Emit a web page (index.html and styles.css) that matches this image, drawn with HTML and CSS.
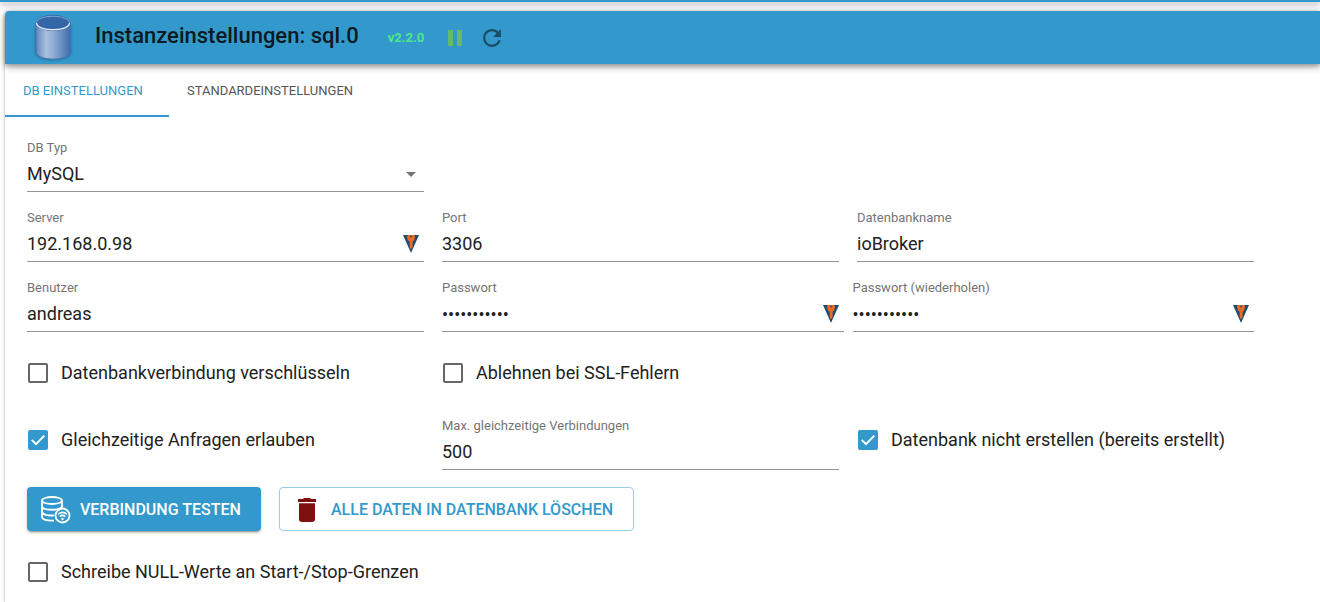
FILE: index.html
```html
<!DOCTYPE html>
<html lang="de">
<head>
<meta charset="utf-8">
<title>Instanzeinstellungen: sql.0</title>
<link rel="stylesheet" href="styles.css">
</head>
<body>
<svg class="defs" aria-hidden="true">
  <symbol id="key" viewBox="0 0 16 18">
    <path d="M0 0H16L8 18Z" fill="#1f4d6e"/>
    <path d="M4.600 0H11.400L12 2.500L11 5.500L9.600 6.800V12L8 14.200L6.700 12.500V6.800L5 5.500L4 2.500Z" fill="#ee6a24"/>
    <circle cx="8" cy="1.500" r=".9" fill="#1f4d6e"/>
  </symbol>
</svg>
<div class="app-bar"></div>
<main class="card">
  <header class="toolbar">
    <svg class="db-logo" viewBox="0 0 42 48" aria-hidden="true">
      <defs>
        <linearGradient id="side"><stop offset="0" stop-color="#5f86c0"/><stop offset=".3" stop-color="#a9c0de"/><stop offset=".5" stop-color="#90aed4"/><stop offset="1" stop-color="#426fae"/></linearGradient>
        <filter id="soft" x="-20%" y="-20%" width="140%" height="140%"><feGaussianBlur stdDeviation="1.500"/></filter>
      </defs>
      <path d="M3 12V38C3 49 39 49 39 38V12Z" fill="#1f5384" opacity=".6" filter="url(#soft)"/>
      <path d="M4 9V38C4 47.500 38 47.500 38 38V9Z" fill="url(#side)" stroke="#4473ad"/>
      <ellipse cx="21" cy="9" rx="17" ry="7.500" fill="#3566a8" stroke="#2f5c9d"/>
      <path d="M4.500 9C5 18 37 18 37.500 9" fill="none" stroke="#e9f0f8" stroke-width="1.300"/>
      <path d="M4.500 9C5 0 37 0 37.500 9" fill="none" stroke="#9bb9dc" stroke-width=".8"/>
    </svg>
    <h1 class="title">Instanzeinstellungen: sql.0</h1>
    <span class="version">v2.2.0</span>
    <button class="icon-button pause" type="button" aria-label="Pause">
      <svg viewBox="0 0 14 16" width="14" height="16"><path d="M0 0H5V16H0ZM9 0H14V16H9Z" fill="currentColor"/></svg>
    </button>
    <button class="icon-button reload" type="button" aria-label="Neu laden">
      <svg viewBox="3 3 18 18" width="20" height="20"><path fill="currentColor" d="M17.650 6.350C16.200 4.900 14.210 4 12 4c-4.420 0-7.990 3.580-7.990 8s3.570 8 7.990 8c3.730 0 6.840-2.550 7.730-6h-2.080c-.820 2.330-3.040 4-5.650 4-3.310 0-6-2.690-6-6s2.690-6 6-6c1.660 0 3.140.69 4.220 1.780L13 11h7V4l-2.350 2.350z"/></svg>
    </button>
  </header>

  <nav class="tabs" role="tablist">
    <button class="tab active" type="button" role="tab" aria-selected="true">DB EINSTELLUNGEN</button>
    <button class="tab" type="button" role="tab" aria-selected="false">STANDARDEINSTELLUNGEN</button>
  </nav>

  <form class="settings">
    <div class="row">
      <div class="field">
        <label for="dbtype">DB Typ</label>
        <div class="control">
          <select id="dbtype"><option>MySQL</option></select>
          <svg class="adorn arrow" viewBox="0 0 10 5"><path d="M0 0H10L5 5Z" fill="#757575"/></svg>
        </div>
      </div>
    </div>
    <div class="row">
      <div class="field">
        <label for="server">Server</label>
        <div class="control"><input id="server" type="text" value="192.168.0.98"><svg class="adorn key"><use href="#key"/></svg></div>
      </div>
      <div class="field">
        <label for="port">Port</label>
        <div class="control"><input id="port" type="text" value="3306"></div>
      </div>
      <div class="field">
        <label for="dbname">Datenbankname</label>
        <div class="control"><input id="dbname" type="text" value="ioBroker"></div>
      </div>
    </div>
    <div class="row">
      <div class="field">
        <label for="user">Benutzer</label>
        <div class="control"><input id="user" type="text" value="andreas"></div>
      </div>
      <div class="passwords">
        <div class="field">
          <label for="pass">Passwort</label>
          <div class="control"><input id="pass" type="password" value="abcdefghijk"><svg class="adorn key"><use href="#key"/></svg></div>
        </div>
        <div class="field">
          <label for="pass2">Passwort (wiederholen)</label>
          <div class="control"><input id="pass2" type="password" value="abcdefghijk"><svg class="adorn key"><use href="#key"/></svg></div>
        </div>
      </div>
    </div>
    <div class="row padded spaced">
      <label class="check"><input type="checkbox">Datenbankverbindung verschlüsseln</label>
      <label class="check"><input type="checkbox">Ablehnen bei SSL-Fehlern</label>
    </div>
    <div class="row">
      <label class="check"><input type="checkbox" checked>Gleichzeitige Anfragen erlauben</label>
      <div class="field">
        <label for="maxcon">Max. gleichzeitige Verbindungen</label>
        <div class="control"><input id="maxcon" type="text" value="500"></div>
      </div>
      <label class="check"><input type="checkbox" checked>Datenbank nicht erstellen (bereits erstellt)</label>
    </div>
    <div class="actions">
      <button class="button primary" type="button">
        <svg viewBox="0 0 30 28" width="30" height="28" fill="none" stroke="#fff" stroke-width="1.800">
          <ellipse cx="11" cy="4.500" rx="10" ry="3.500"/>
          <path d="M1 4.500V21C1 23.500 6 25 13 24.600M21 4.500V11.500M1 10C1 15 21 15 21 10M1 15.500C1 18.500 7 20 13 19.300"/>
          <circle cx="21.500" cy="19.500" r="7"/>
          <path d="M17 18.300Q21.500 14.500 26 18.300M18.700 20.600Q21.500 18.200 24.300 20.600" stroke-width="1.500"/>
          <circle cx="21.500" cy="23" r="1.200" fill="#fff" stroke="none"/>
        </svg>
        VERBINDUNG TESTEN
      </button>
      <button class="button outlined" type="button">
        <svg viewBox="0 0 18 24" width="18" height="24" fill="#7f1010"><path d="M0 1H5L6 0H12L13 1H18V4H0ZM1 5.200H17V21Q17 24 14 24H4Q1 24 1 21Z"/></svg>
        ALLE DATEN IN DATENBANK LÖSCHEN
      </button>
    </div>
    <div class="row padded">
      <label class="check wide"><input type="checkbox">Schreibe NULL-Werte an Start-/Stop-Grenzen</label>
    </div>
  </form>
</main>
</body>
</html>
```
FILE: styles.css
```css
* { box-sizing: border-box; }
html { overflow: hidden; }
body {
  margin: 0;
  background: #fff;
  color: #212121;
  font-family: Roboto, "Liberation Sans", sans-serif;
  font-size: 18px;
  line-height: 24px;
}
button, input, select { font: inherit; color: inherit; }
button { border: 0; background: none; padding: 0; cursor: pointer; }
.defs { display: none; }

.app-bar {
  height: 2px;
  background: #3399cc;
  box-shadow: 0 2px 4px rgba(0, 0, 0, .25), 0 4px 6px rgba(0, 0, 0, .16), 0 1px 11px rgba(0, 0, 0, .12);
}
.card {
  margin: 9px 0 0 5px;
  min-height: calc(100vh - 11px);
  background: #fff;
  border-radius: 4px 0 0 0;
  box-shadow: 0 2px 2px rgba(0, 0, 0, .2), 0 1px 4px rgba(0, 0, 0, .2);
}
.toolbar {
  display: flex;
  align-items: center;
  height: 53px;
  padding-left: 27px;
  background: #3399cc;
  border-radius: 4px 0 0 0;
  box-shadow: 0 2px 4px rgba(0, 0, 0, .25), 0 4px 6px rgba(0, 0, 0, .16), 0 1px 11px rgba(0, 0, 0, .12);
}
.db-logo { width: 42px; height: 48px; }
.title { margin: 0 29px 4px 21px; font-size: 22px; line-height: 28px; font-weight: 500; color: #0b1a22; }
.version { color: #4ee888; font-size: 13px; line-height: 20px; font-weight: 700; }
.icon-button { display: flex; }
.pause { margin-left: 24px; color: #66bb6a; }
.reload { margin-left: 20px; color: #1c4c64; }

.tabs { display: flex; }
.tab {
  height: 53px;
  min-width: 164px;
  padding: 2px 18px 0;
  border-bottom: 2px solid transparent;
  font-size: 13px;
  font-weight: 400;
  text-align: left;
  color: #555;
}
.active { color: #3399cc; border-color: #3399cc; }

.settings {
  display: flex;
  flex-direction: column;
  gap: 17px;
  padding: 22px 66px 6px 22px;
}
.row { display: grid; grid-template-columns: repeat(3, minmax(0, 1fr)); gap: 18px; }
.padded { padding: 1px 0; }
.spaced { margin-bottom: 3px; }
.passwords { grid-column: span 2; display: grid; grid-template-columns: repeat(2, minmax(0, 1fr)); gap: 9px; }
.field label { display: block; font-size: 13px; line-height: 18px; color: #757575; }
.control { position: relative; border-bottom: 1px solid #949494; }
.control input, .control select {
  display: block;
  width: 100%;
  height: 34px;
  margin: 0;
  padding: 0;
  border: 0;
  outline: 0;
  background: none;
  appearance: none;
}
.control input[type="text"] { padding-bottom: 2px; }
.adorn { position: absolute; pointer-events: none; }
.arrow { right: 8px; top: 15px; width: 10px; height: 5px; }
.key { right: 5px; top: 8px; width: 16px; height: 18px; }

.check { display: flex; align-items: center; gap: 13px; height: 46px; padding-left: 1px; }
.check input {
  appearance: none;
  display: grid;
  place-items: center;
  flex: none;
  width: 20px;
  height: 20px;
  margin: 0;
  border: 2px solid #666;
  border-radius: 2px;
}
.check input:checked { background: #3399cc; border-color: #3399cc; }
.check input:checked::before {
  content: "";
  width: 14px;
  height: 11px;
  background: #fff;
  clip-path: polygon(0 55%, 10% 44%, 36% 74%, 90% 4%, 100% 17%, 36% 100%);
}
.wide { grid-column: 1 / -1; }

.actions { display: flex; gap: 18px; }
.button {
  display: flex;
  align-items: center;
  height: 44px;
  border-radius: 4px;
  font-size: 16px;
  font-weight: 500;
}
.primary {
  gap: 9px;
  padding: 1px 20px 0 14px;
  min-width: 234px;
  background: #3399cc;
  color: #fff;
  box-shadow: 0 3px 1px -2px rgba(0, 0, 0, .2), 0 2px 2px rgba(0, 0, 0, .14), 0 1px 5px rgba(0, 0, 0, .12);
}
.outlined { gap: 15px; padding: 1px 20px 0 18px; border: 1px solid #99cce6; color: #3399cc; }
```
